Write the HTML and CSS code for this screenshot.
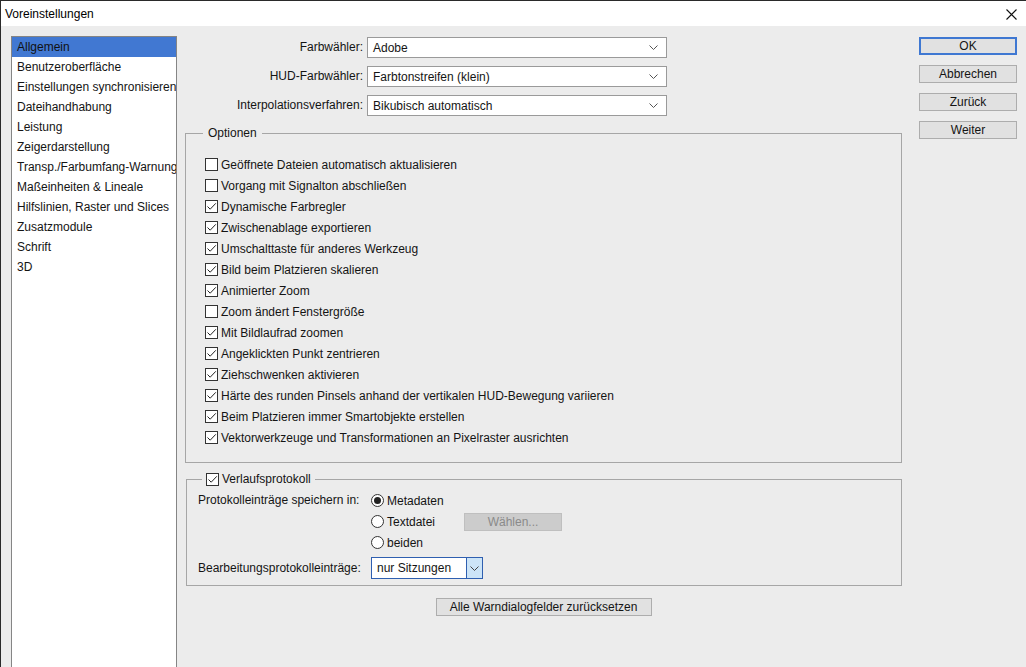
FILE: index.html
```html
<!DOCTYPE html>
<html lang="de">
<head>
<meta charset="utf-8">
<title>Voreinstellungen</title>
<link rel="stylesheet" href="styles.css">
</head>
<body>
<div class="window">
  <div class="titlebar">
    <span class="title">Voreinstellungen</span>
    <svg class="close" width="11" height="11" viewBox="0 0 11 11"><path d="M0.5 0.5L10.5 10.5M10.5 0.5L0.5 10.5" stroke="#111" stroke-width="1.1" fill="none"/></svg>
  </div>
  <div class="main">
    <ul class="sidebar">
      <li class="selected">Allgemein</li>
      <li>Benutzeroberfläche</li>
      <li>Einstellungen synchronisieren</li>
      <li>Dateihandhabung</li>
      <li>Leistung</li>
      <li>Zeigerdarstellung</li>
      <li>Transp./Farbumfang-Warnung</li>
      <li>Maßeinheiten &amp; Lineale</li>
      <li>Hilfslinien, Raster und Slices</li>
      <li>Zusatzmodule</li>
      <li>Schrift</li>
      <li>3D</li>
    </ul>
    <div class="content">
      <div class="selects">
        <label class="sel-label">Farbwähler:</label>
        <div class="select"><span>Adobe</span><svg class="chev" width="9" height="5" viewBox="0 0 9 5"><path d="M0.5 0.5L4.5 4.5L8.5 0.5" stroke="#555" fill="none"/></svg></div>
        <label class="sel-label">HUD-Farbwähler:</label>
        <div class="select"><span>Farbtonstreifen (klein)</span><svg class="chev" width="9" height="5" viewBox="0 0 9 5"><path d="M0.5 0.5L4.5 4.5L8.5 0.5" stroke="#555" fill="none"/></svg></div>
        <label class="sel-label">Interpolationsverfahren:</label>
        <div class="select"><span>Bikubisch automatisch</span><svg class="chev" width="9" height="5" viewBox="0 0 9 5"><path d="M0.5 0.5L4.5 4.5L8.5 0.5" stroke="#555" fill="none"/></svg></div>
      </div>

      <fieldset class="group options">
        <legend>Optionen</legend>
        <div class="check"><span class="box"></span>Geöffnete Dateien automatisch aktualisieren</div>
        <div class="check"><span class="box"></span>Vorgang mit Signalton abschließen</div>
        <div class="check"><span class="box on"><svg width="11" height="11" viewBox="0 0 11 11"><path d="M1.5 5.5L4.2 8.2L9.8 2.3" stroke="#222" stroke-width="1" fill="none"/></svg></span>Dynamische Farbregler</div>
        <div class="check"><span class="box on"><svg width="11" height="11" viewBox="0 0 11 11"><path d="M1.5 5.5L4.2 8.2L9.8 2.3" stroke="#222" stroke-width="1" fill="none"/></svg></span>Zwischenablage exportieren</div>
        <div class="check"><span class="box on"><svg width="11" height="11" viewBox="0 0 11 11"><path d="M1.5 5.5L4.2 8.2L9.8 2.3" stroke="#222" stroke-width="1" fill="none"/></svg></span>Umschalttaste für anderes Werkzeug</div>
        <div class="check"><span class="box on"><svg width="11" height="11" viewBox="0 0 11 11"><path d="M1.5 5.5L4.2 8.2L9.8 2.3" stroke="#222" stroke-width="1" fill="none"/></svg></span>Bild beim Platzieren skalieren</div>
        <div class="check"><span class="box on"><svg width="11" height="11" viewBox="0 0 11 11"><path d="M1.5 5.5L4.2 8.2L9.8 2.3" stroke="#222" stroke-width="1" fill="none"/></svg></span>Animierter Zoom</div>
        <div class="check"><span class="box"></span>Zoom ändert Fenstergröße</div>
        <div class="check"><span class="box on"><svg width="11" height="11" viewBox="0 0 11 11"><path d="M1.5 5.5L4.2 8.2L9.8 2.3" stroke="#222" stroke-width="1" fill="none"/></svg></span>Mit Bildlaufrad zoomen</div>
        <div class="check"><span class="box on"><svg width="11" height="11" viewBox="0 0 11 11"><path d="M1.5 5.5L4.2 8.2L9.8 2.3" stroke="#222" stroke-width="1" fill="none"/></svg></span>Angeklickten Punkt zentrieren</div>
        <div class="check"><span class="box on"><svg width="11" height="11" viewBox="0 0 11 11"><path d="M1.5 5.5L4.2 8.2L9.8 2.3" stroke="#222" stroke-width="1" fill="none"/></svg></span>Ziehschwenken aktivieren</div>
        <div class="check"><span class="box on"><svg width="11" height="11" viewBox="0 0 11 11"><path d="M1.5 5.5L4.2 8.2L9.8 2.3" stroke="#222" stroke-width="1" fill="none"/></svg></span>Härte des runden Pinsels anhand der vertikalen HUD-Bewegung variieren</div>
        <div class="check"><span class="box on"><svg width="11" height="11" viewBox="0 0 11 11"><path d="M1.5 5.5L4.2 8.2L9.8 2.3" stroke="#222" stroke-width="1" fill="none"/></svg></span>Beim Platzieren immer Smartobjekte erstellen</div>
        <div class="check"><span class="box on"><svg width="11" height="11" viewBox="0 0 11 11"><path d="M1.5 5.5L4.2 8.2L9.8 2.3" stroke="#222" stroke-width="1" fill="none"/></svg></span>Vektorwerkzeuge und Transformationen an Pixelraster ausrichten</div>
      </fieldset>

      <fieldset class="group history">
        <legend><span class="check legend-check"><span class="box on"><svg width="11" height="11" viewBox="0 0 11 11"><path d="M1.5 5.5L4.2 8.2L9.8 2.3" stroke="#222" stroke-width="1" fill="none"/></svg></span>Verlaufsprotokoll</span></legend>
        <div class="hist-grid">
          <div class="hist-label">Protokolleinträge speichern in:</div>
          <div class="radios">
            <div class="radio-row"><span class="radio on"></span><span class="radio-text">Metadaten</span></div>
            <div class="radio-row"><span class="radio"></span><span class="radio-text">Textdatei</span><span class="btn disabled">Wählen...</span></div>
            <div class="radio-row"><span class="radio"></span><span class="radio-text">beiden</span></div>
          </div>
          <div class="hist-label sel2-label">Bearbeitungsprotokolleinträge:</div>
          <div class="select2"><span class="sel2-text">nur Sitzungen</span><span class="sel2-btn"><svg width="9" height="5" viewBox="0 0 9 5"><path d="M0.5 0.5L4.5 4.5L8.5 0.5" stroke="#444" fill="none"/></svg></span></div>
        </div>
      </fieldset>

      <div class="reset-row"><span class="btn reset">Alle Warndialogfelder zurücksetzen</span></div>
    </div>
    <div class="buttons">
      <span class="btn side primary">OK</span>
      <span class="btn side">Abbrechen</span>
      <span class="btn side">Zurück</span>
      <span class="btn side">Weiter</span>
    </div>
  </div>
</div>
</body>
</html>
```
FILE: styles.css
```css
* { box-sizing: border-box; }
html, body { margin: 0; padding: 0; height: 100%; overflow: hidden; }
body {
  font-family: "Liberation Sans", Arial, sans-serif;
  font-size: 12px;
  color: #141414;
  background: #ececec;
}
.window {
  height: 100%;
  display: flex;
  flex-direction: column;
  border-top: 1px solid #2a2a2a;
  border-left: 1px solid #2a2a2a;
}
.titlebar {
  height: 25px;
  background: #fff;
  display: flex;
  align-items: center;
  justify-content: space-between;
  padding: 0 9px 0 4px;
  flex: none;
}
.title { font-size: 12px; color: #000; padding-top: 1px; }
.close { margin-top: 1px; }
.main {
  flex: 1;
  display: flex;
  align-items: stretch;
  padding-top: 10px;
  padding-left: 10px;
  min-height: 0;
}
.sidebar {
  list-style: none;
  margin: 0 8px 0 0;
  padding: 0;
  width: 166px;
  flex: none;
  background: #fff;
  border: 1px solid #858585;
  border-bottom: none;
  overflow: hidden;
}
.sidebar li {
  height: 20px;
  line-height: 21px;
  padding-left: 5px;
  white-space: nowrap;
  color: #141414;
}
.sidebar li.selected { background: #4178d2; color: #111; }

.content {
  width: 717px;
  flex: none;
  display: flex;
  flex-direction: column;
}
.selects {
  display: grid;
  grid-template-columns: 178px 300px;
  column-gap: 4px;
  row-gap: 8px;
  margin-top: 1px;
}
.sel-label {
  text-align: right;
  line-height: 21px;
  height: 21px;
}
.select {
  height: 21px;
  background: #fff;
  border: 1px solid #9a9a9a;
  display: flex;
  align-items: center;
  justify-content: space-between;
  padding: 0 8px 0 5px;
}
.chev { display: block; }

.group {
  margin: 0;
  border: 1px solid #a6a6a6;
  min-width: 0;
}
.group legend {
  line-height: 14px;
  padding: 0 5px;
  margin-left: -2px;
}
.options {
  margin-top: 10px;
  padding: 14px 0 14px 19px;
}
.check {
  display: flex;
  align-items: center;
  height: 21px;
  white-space: nowrap;
}
.box {
  width: 13px;
  height: 13px;
  border: 1px solid #333;
  background: #fff;
  margin-right: 3px;
  flex: none;
  display: flex;
  align-items: center;
  justify-content: center;
}
.box svg { display: block; }

.history {
  margin-top: 9px;
  margin-left: 1px;
  width: 716px;
  padding: 4px 0 6px 11px;
}
.history legend { margin-left: 4px; padding: 0 4px; }
.legend-check { height: 14px; }
.hist-grid {
  display: grid;
  grid-template-columns: 166px auto;
  column-gap: 7px;
  align-items: start;
}
.hist-label { line-height: 21px; white-space: nowrap; }
.radios { display: flex; flex-direction: column; }
.radio-row { display: flex; align-items: center; height: 21px; }
.radio {
  width: 13px;
  height: 13px;
  border-radius: 50%;
  border: 1px solid #333;
  background: #fff;
  flex: none;
  margin-right: 3px;
  position: relative;
}
.radio.on::after {
  content: "";
  position: absolute;
  left: 2px; top: 2px;
  width: 7px; height: 7px;
  border-radius: 50%;
  background: #222;
}
.radio-text { width: 77px; }
.sel2-label { margin-top: 4px; line-height: 22px; }
.select2 {
  margin-top: 4px;
  width: 112px;
  height: 22px;
  border: 1px solid #2f5fb0;
  background: #fff;
  display: flex;
  align-items: stretch;
}
.sel2-text { flex: 1; padding-left: 5px; line-height: 20px; }
.sel2-btn {
  width: 16px;
  border-left: 1px solid #2f5fb0;
  background: #cce4f7;
  display: flex;
  align-items: center;
  justify-content: center;
}

.btn {
  display: flex;
  align-items: center;
  justify-content: center;
  height: 18px;
  border: 1px solid #adadad;
  background: #e1e1e1;
  color: #141414;
  white-space: nowrap;
}
.btn.disabled {
  width: 98px;
  height: 18px;
  background: #cccccc;
  border-color: #bfbfbf;
  color: #8a8a8a;
}
.reset-row {
  display: flex;
  justify-content: center;
  margin-top: 12px;
}
.btn.reset { width: 216px; }

.buttons {
  margin-left: 17px;
  width: 98px;
  display: flex;
  flex-direction: column;
  gap: 10px;
  padding-top: 1px;
}
.btn.side { height: 18px; }
.btn.primary { border: 2px solid #3f78d2; }
```
